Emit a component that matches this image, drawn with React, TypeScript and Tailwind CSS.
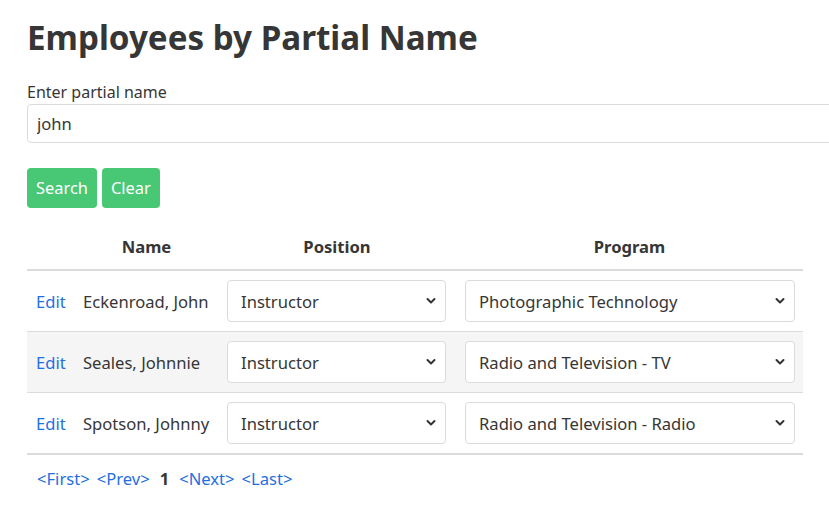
import React, { useState } from 'react';

type Row = { name: string; position: string; program: string };

const rows: Row[] = [
  { name: 'Eckenroad, John', position: 'Instructor', program: 'Photographic Technology' },
  { name: 'Seales, Johnnie', position: 'Instructor', program: 'Radio and Television - TV' },
  { name: 'Spotson, Johnny', position: 'Instructor', program: 'Radio and Television - Radio' },
];

function Chevron() {
  return (
    <svg
      className="pointer-events-none absolute right-[10px] top-1/2 -translate-y-1/2"
      width="10"
      height="7"
      viewBox="0 0 10 7"
      fill="none"
    >
      <path d="M1.5 1.5L5 5L8.5 1.5" stroke="#333" strokeWidth="2" strokeLinecap="round" strokeLinejoin="round" />
    </svg>
  );
}

function Select({ value, width }: { value: string; width: string }) {
  return (
    <div className={`relative ${width}`}>
      <select
        defaultValue={value}
        className="h-[42px] w-full appearance-none rounded-[4px] border border-[#dbdbdb] bg-white pl-[13px] pr-8 pt-[2px] text-[16.6px] text-[#363636] outline-none"
      >
        <option>{value}</option>
      </select>
      <Chevron />
    </div>
  );
}

export default function App() {
  const [query, setQuery] = useState('john');

  return (
    <div className="min-h-screen overflow-hidden bg-white pl-[27px] pt-[14px] font-['Noto_Sans','Open_Sans',sans-serif] text-[16px] text-[#4a4a4a]">
      <h1 className="text-[33.2px] font-bold leading-[48px] text-[#363636]">Employees by Partial Name</h1>

      <div className="mt-[19px]">
        <label className="block leading-[22px] text-[#363636]">Enter partial name</label>
        <input
          value={query}
          onChange={(e) => setQuery(e.target.value)}
          className="mt-[1px] block h-[39px] w-[820px] rounded-[4px] border border-[#dbdbdb] px-[9px] text-[16.6px] text-[#363636] outline-none"
        />
      </div>

      <div className="mt-[25px] flex gap-[5px]">
        <button className="h-[40px] rounded-[4px] bg-[#48c774] px-[9px] text-[16.4px] text-white">Search</button>
        <button className="h-[40px] rounded-[4px] bg-[#48c774] px-[9px] text-[16.4px] text-white">Clear</button>
      </div>

      <table className="mt-[18px] w-[776px] border-collapse text-[16.6px]">
        <thead>
          <tr className="h-[44px] border-b-2 border-[#dbdbdb]">
            <th className="w-[48px]"></th>
            <th className="w-[143px] text-center font-bold text-[#363636]">Name</th>
            <th className="w-[238px] text-center font-bold text-[#363636]">Position</th>
            <th className="w-[347px] text-center font-bold text-[#363636]">Program</th>
          </tr>
        </thead>
        <tbody>
          {rows.map((r, i) => (
            <tr
              key={r.name}
              className={`${i === 1 ? 'bg-[#f5f5f5]' : ''} ${i === rows.length - 1 ? 'border-b-2' : 'border-b'} border-[#dbdbdb]`}
            >
              <td className="py-[9px] pl-[9px] pt-[11px]">
                <a href="#" className="text-[#1f6fe0]">Edit</a>
              </td>
              <td className="pl-[8px] pt-[2px] text-[#363636]">{r.name}</td>
              <td className="py-[9px] pl-[9px]">
                <Select value={r.position} width="w-[219px]" />
              </td>
              <td className="py-[9px] pl-[9px]">
                <Select value={r.program} width="w-[330px]" />
              </td>
            </tr>
          ))}
        </tbody>
      </table>

      <div className="mt-[12px] flex gap-[7px] pl-[10px] text-[16.6px]">
        <a href="#" className="text-[#1f6fe0]">&lt;First&gt;</a>
        <a href="#" className="text-[#1f6fe0]">&lt;Prev&gt;</a>
        <b className="px-[3px] text-[#363636]">1</b>
        <a href="#" className="text-[#1f6fe0]">&lt;Next&gt;</a>
        <a href="#" className="text-[#1f6fe0]">&lt;Last&gt;</a>
      </div>
    </div>
  );
}
